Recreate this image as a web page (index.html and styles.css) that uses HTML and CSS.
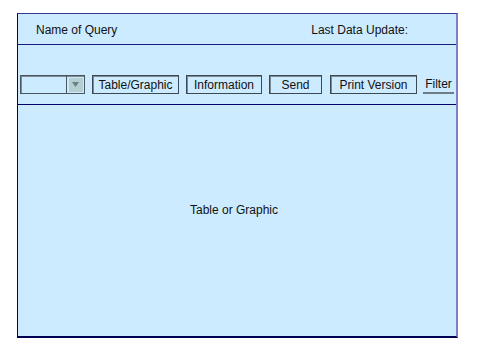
FILE: index.html
```html
<!DOCTYPE html>
<html>
<head>
<meta charset="utf-8">
<link rel="stylesheet" href="styles.css">
</head>
<body>
<div class="frame">
  <div class="header">
    <span>Name of Query</span>
    <span>Last Data Update:</span>
  </div>
  <div class="toolbar">
    <div class="select">
      <div class="select-field"></div>
      <div class="select-arrow"><span class="arrow-box"><svg width="9" height="7" viewBox="0 0 9 7"><path d="M1 1 L8 1 L4.5 6 Z" fill="#6f7f86"/></svg></span></div>
    </div>
    <div class="btn w-table">Table/Graphic</div>
    <div class="btn w-info">Information</div>
    <div class="btn w-send">Send</div>
    <div class="btn w-print">Print Version</div>
    <div class="link">Filter</div>
  </div>
  <div class="content">Table or Graphic</div>
</div>
</body>
</html>
```
FILE: styles.css
```css
html, body {
  margin: 0;
  padding: 0;
  background: #ffffff;
}
body {
  font-family: "Liberation Sans", Arial, sans-serif;
  font-size: 12px;
  color: #111111;
}
.frame {
  margin: 13px 0 0 17px;
  width: 441px;
  height: 325px;
  box-sizing: border-box;
  background: #cdebff;
  border-top: 1px solid #3a3a95;
  border-left: 1px solid #000066;
  border-bottom: 2px solid #000055;
  border-right: 2px solid #7f7fc4;
  display: flex;
  flex-direction: column;
}
.header {
  height: 29px;
  border-bottom: 1px solid #1a1a80;
  display: flex;
  justify-content: space-between;
  align-items: center;
  padding: 1px 48px 0 18px;
}
.toolbar {
  height: 60px;
  box-sizing: border-box;
  border-bottom: 1px solid #000066;
  display: flex;
  align-items: flex-start;
  gap: 7px;
  padding: 30px 0 0 2px;
}
.select {
  width: 65px;
  height: 19px;
  box-sizing: border-box;
  border: 1px solid #4a5660;
  box-shadow: inset 1px 1px 0 #7d8a94;
  display: flex;
}
.select-field {
  width: 45px;
  border-right: 1px solid #4a5660;
}
.select-arrow {
  flex: 1;
  display: flex;
  align-items: center;
  justify-content: center;
}
.arrow-box {
  width: 14px;
  height: 14px;
  background: #b4cfd2;
  display: flex;
  align-items: center;
  justify-content: center;
}
.arrow-box svg {
  display: block;
}
.btn {
  height: 19px;
  box-sizing: border-box;
  border: 1px solid #3c4852;
  box-shadow: inset 1px 1px 0 #7d8a94;
  display: flex;
  align-items: center;
  justify-content: center;
  padding-top: 1px;
}
.w-table { width: 87px; }
.w-info { width: 76px; }
.w-send { width: 53px; }
.w-print { width: 87px; margin-left: 1px; }
.link {
  margin-left: -1px;
  width: 31px;
  height: 19px;
  box-sizing: border-box;
  display: flex;
  align-items: center;
  justify-content: center;
  padding-top: 1px;
  border-bottom: 2px solid #6e7c86;
}
.content {
  flex: 1;
  display: flex;
  align-items: center;
  justify-content: center;
  padding: 0 6px 22px 0;
}
```
